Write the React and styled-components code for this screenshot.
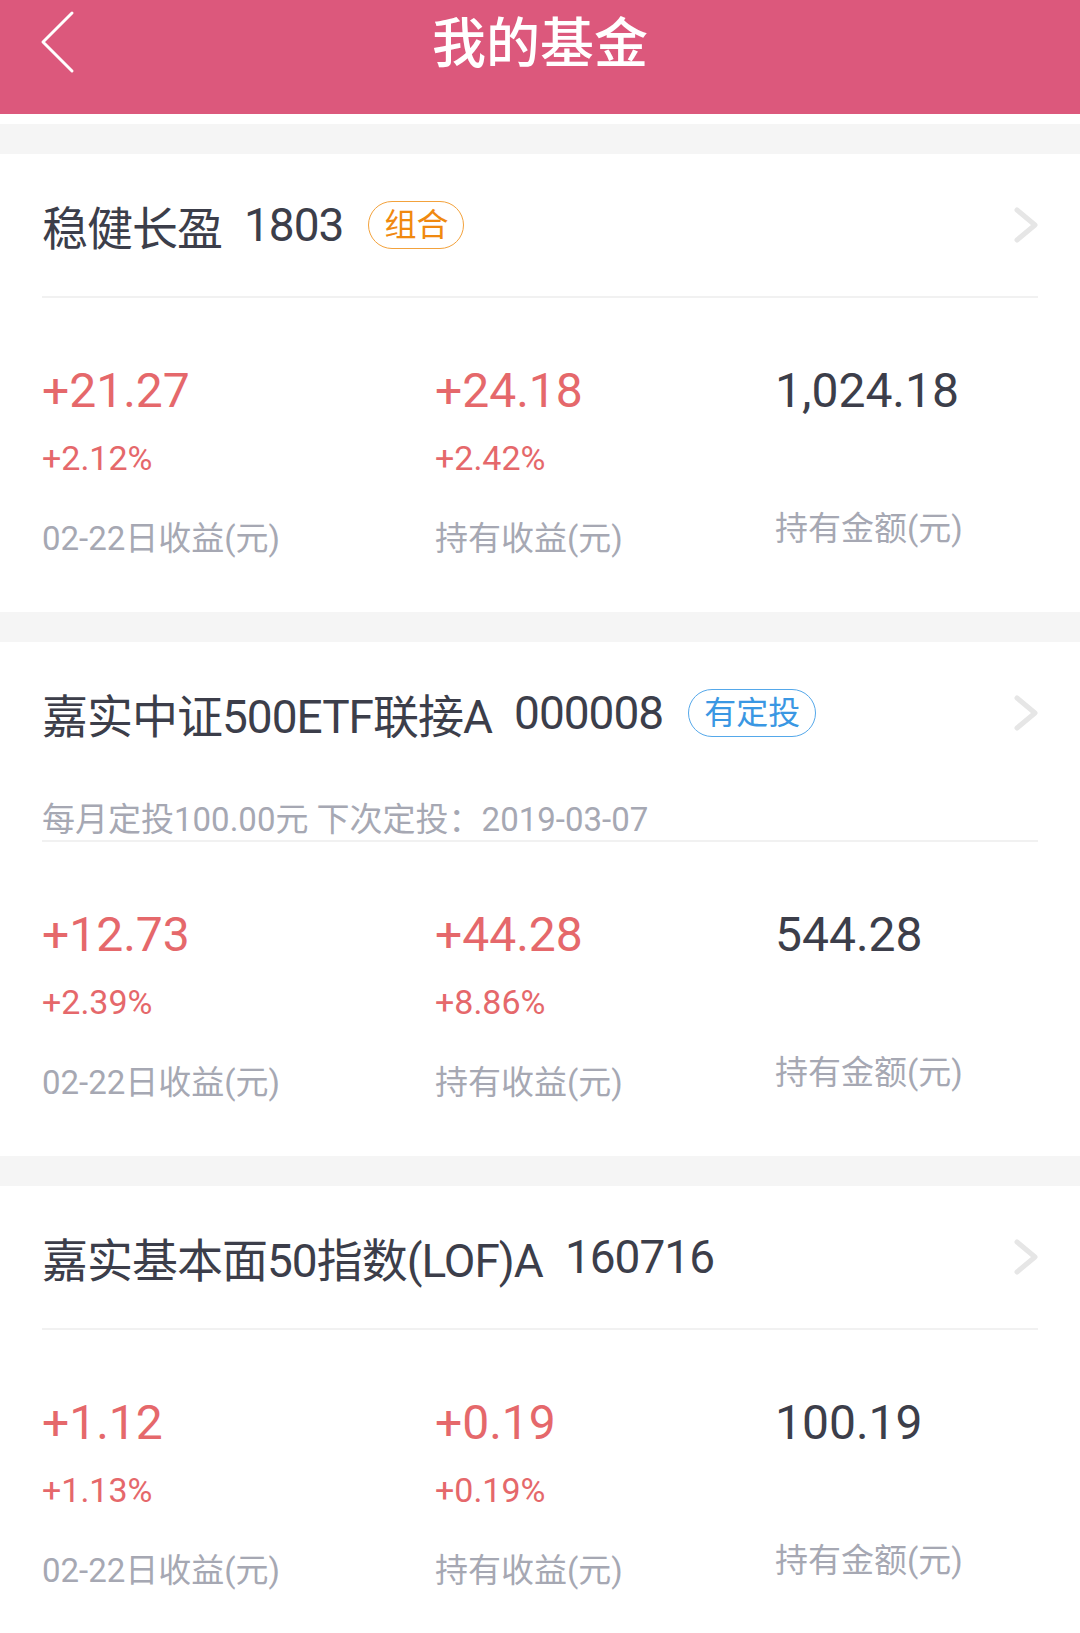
import React from 'react';
import styled, { createGlobalStyle } from 'styled-components';

const GlobalStyle = createGlobalStyle`
  html, body {
    margin: 0;
    padding: 0;
    background: #ffffff;
  }
  body {
    font-family: Roboto, "Noto Sans CJK SC", sans-serif;
    -webkit-font-smoothing: antialiased;
  }
`;

const colors = {
  pink: '#dc587c',
  dark: '#3c3e4a',
  red: '#e5686b',
  gray: '#a6a8b3',
  band: '#f5f5f5',
  line: '#f1f1f1',
  orange: '#f0890f',
  blue: '#3a97e3',
};

const Page = styled.div`
  width: 1080px;
  background: #ffffff;
`;

const NavBar = styled.header`
  background: ${colors.pink};
  height: 114px;
  display: grid;
  grid-template-columns: 1fr auto 1fr;
  align-items: start;
`;

const BackButton = styled.button`
  justify-self: start;
  margin: 7px 0 0 36px;
  padding: 0;
  border: 0;
  background: none;
  width: 40px;
  height: 70px;
  svg {
    display: block;
  }
`;

const NavTitle = styled.h1`
  margin: 0;
  height: 90px;
  line-height: 90px;
  font-size: 54px;
  font-weight: 500;
  color: #ffffff;
`;

const Band = styled.div`
  height: 30px;
  background: ${colors.band};
  margin-top: ${(p) => p.$gap || 0}px;
`;

const Card = styled.section`
  padding: 0 42px;
  background: #ffffff;
`;

const TitleRow = styled.div`
  height: 142px;
  display: flex;
  align-items: center;
  justify-content: space-between;
`;

const TitleText = styled.div`
  display: flex;
  align-items: center;
  font-size: 46px;
  letter-spacing: -1px;
  color: ${colors.dark};
  white-space: nowrap;
`;

const Code = styled.span`
  margin-left: 22px;
`;

const Tag = styled.span`
  margin-left: 25px;
  height: 46px;
  line-height: 46px;
  padding: 0 15px;
  border: 1.5px solid ${(p) => p.$border};
  border-radius: 26px;
  font-size: 32px;
  letter-spacing: 0;
  color: ${(p) => p.$color};
`;

const Chevron = styled.svg`
  display: block;
  flex: none;
  margin-right: -2px;
`;

const SubLine = styled.div`
  padding: 16px 0 0;
  line-height: 40px;
  font-size: 33px;
  color: ${colors.gray};
  white-space: nowrap;
`;

const Divider = styled.div`
  height: 2px;
  background: ${colors.line};
`;

const Stats = styled.div`
  display: grid;
  grid-template-columns: 393px 340px 1fr;
  padding: 63px 0 51px;
`;

const StatCol = styled.div`
  display: flex;
  flex-direction: column;
  align-items: flex-start;
`;

const BigNum = styled.div`
  font-size: 48px;
  line-height: 60px;
  color: ${(p) => (p.$plain ? colors.dark : colors.red)};
`;

const Pct = styled.div`
  margin-top: 17px;
  font-size: 34px;
  line-height: 40px;
  color: ${colors.red};
`;

const Label = styled.div`
  margin-top: ${(p) => (p.$solo ? 86 : 39)}px;
  font-size: 33px;
  line-height: 44px;
  color: ${colors.gray};
  white-space: nowrap;
`;

const funds = [
  {
    name: '稳健长盈',
    code: '1803',
    tag: { text: '组合', color: colors.orange, border: '#f3a23c' },
    day: '+21.27',
    dayPct: '+2.12%',
    hold: '+24.18',
    holdPct: '+2.42%',
    amount: '1,024.18',
  },
  {
    name: '嘉实中证500ETF联接A',
    code: '000008',
    tag: { text: '有定投', color: colors.blue, border: '#55a8ea' },
    sub: '每月定投100.00元 下次定投：2019-03-07',
    day: '+12.73',
    dayPct: '+2.39%',
    hold: '+44.28',
    holdPct: '+8.86%',
    amount: '544.28',
  },
  {
    name: '嘉实基本面50指数(LOF)A',
    code: '160716',
    day: '+1.12',
    dayPct: '+1.13%',
    hold: '+0.19',
    holdPct: '+0.19%',
    amount: '100.19',
  },
];

const FundCard = ({ fund }) => (
  <Card>
    <TitleRow>
      <TitleText>
        <span>{fund.name}</span>
        <Code>{fund.code}</Code>
        {fund.tag && (
          <Tag $color={fund.tag.color} $border={fund.tag.border}>
            {fund.tag.text}
          </Tag>
        )}
      </TitleText>
      <Chevron width="28" height="40" viewBox="0 0 28 40">
        <path
          d="M5 5 L23 20 L5 35"
          fill="none"
          stroke="#e6e6e6"
          strokeWidth="5"
          strokeLinecap="round"
          strokeLinejoin="round"
        />
      </Chevron>
    </TitleRow>
    {fund.sub && <SubLine>{fund.sub}</SubLine>}
    <Divider />
    <Stats>
      <StatCol>
        <BigNum>{fund.day}</BigNum>
        <Pct>{fund.dayPct}</Pct>
        <Label>02-22日收益(元)</Label>
      </StatCol>
      <StatCol>
        <BigNum>{fund.hold}</BigNum>
        <Pct>{fund.holdPct}</Pct>
        <Label>持有收益(元)</Label>
      </StatCol>
      <StatCol>
        <BigNum $plain>{fund.amount}</BigNum>
        <Label $solo>持有金额(元)</Label>
      </StatCol>
    </Stats>
  </Card>
);

export default function App() {
  return (
    <Page>
      <GlobalStyle />
      <NavBar>
        <BackButton aria-label="返回">
          <svg width="40" height="70" viewBox="0 0 40 70">
            <path
              d="M36 6 L7 35 L36 64"
              fill="none"
              stroke="#ffffff"
              strokeWidth="3"
              strokeLinecap="round"
              strokeLinejoin="round"
            />
          </svg>
        </BackButton>
        <NavTitle>我的基金</NavTitle>
        <div />
      </NavBar>
      <Band $gap={10} />
      {funds.map((fund, i) => (
        <React.Fragment key={fund.code}>
          {i > 0 && <Band />}
          <FundCard fund={fund} />
        </React.Fragment>
      ))}
    </Page>
  );
}
